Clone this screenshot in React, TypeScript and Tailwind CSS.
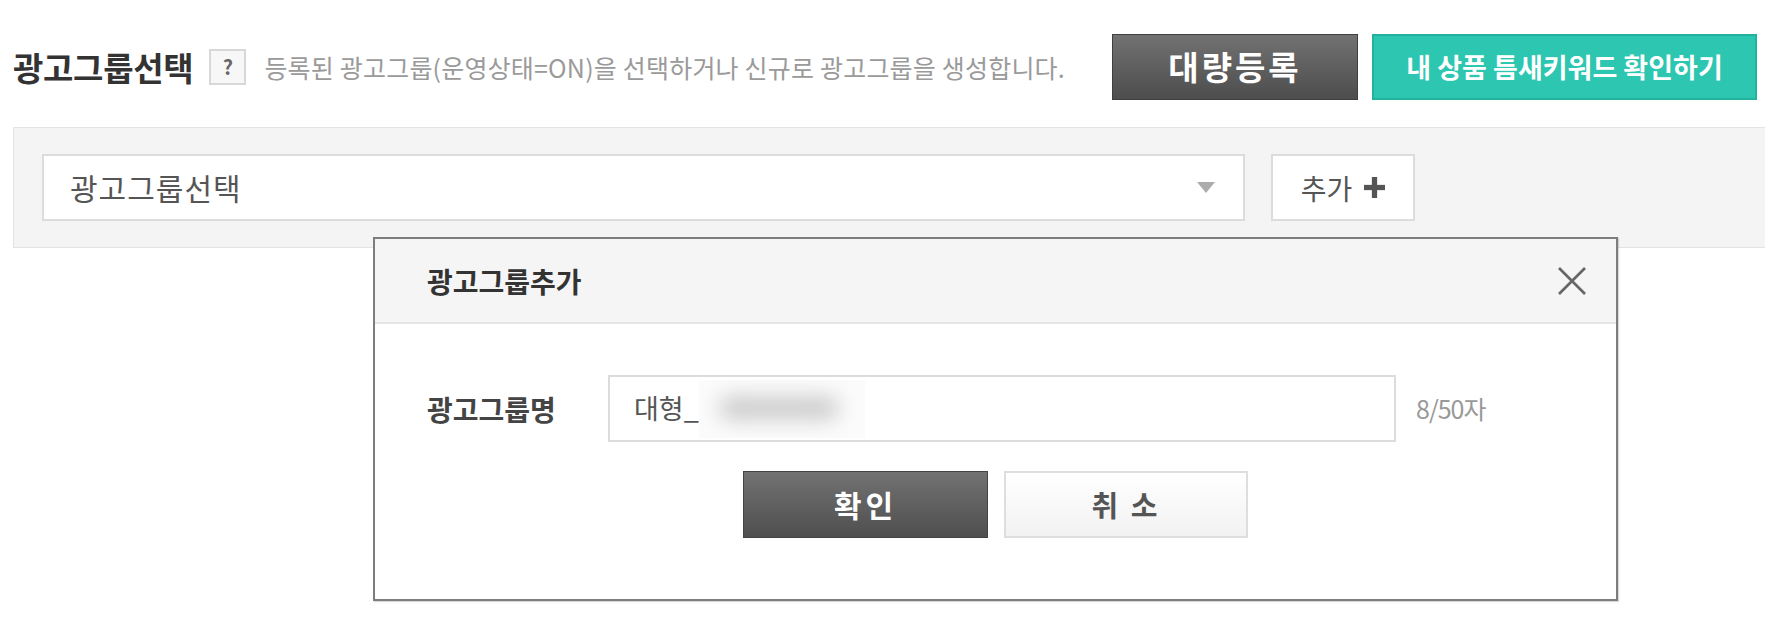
import React from "react";

function CloseIcon() {
  return (
    <svg width="32" height="32" viewBox="0 0 32 32">
      <line x1="3" y1="3" x2="29" y2="29" stroke="#666" strokeWidth="2.6" />
      <line x1="29" y1="3" x2="3" y2="29" stroke="#666" strokeWidth="2.6" />
    </svg>
  );
}

export default function App() {
  return (
    <div className="relative w-[1765px] h-[626px] bg-white overflow-hidden font-['Noto_Sans_CJK_KR','Noto_Sans',sans-serif]">
      {/* header row */}
      <div className="flex items-center h-[66px] mt-[34px] pl-[13px] pr-[8px]">
        <h1 className="text-[33px] font-bold text-[#333] tracking-[-0.3px] leading-none">광고그룹선택</h1>
        <div className="ml-[16px] w-[37px] h-[36px] border-2 border-[#d8d8d8] bg-[#f7f7f7] flex items-center justify-center text-[20px] font-bold text-[#666] leading-none">
          ?
        </div>
        <p className="ml-[18px] text-[25px] text-[#9a9a9a] tracking-[0.2px] leading-none">
          등록된 광고그룹(운영상태=ON)을 선택하거나 신규로 광고그룹을 생성합니다.
        </p>
        <div className="ml-auto flex gap-[14px]">
          <button className="w-[246px] h-[66px] border border-[#3f3f3f] bg-gradient-to-b from-[#727272] to-[#4d4d4d] text-white text-[33px] font-bold tracking-[3px] flex items-center justify-center">
            대량등록
          </button>
          <button className="w-[385px] h-[66px] border-2 border-[#22b39e] bg-[#2dc6b0] text-white text-[27px] font-bold tracking-[0px] flex items-center justify-center">
            내 상품 틈새키워드 확인하기
          </button>
        </div>
      </div>

      {/* grey panel */}
      <div className="mt-[27px] ml-[13px] h-[121px] border border-r-0 border-[#e3e3e3] bg-[#f4f4f4] flex items-start pt-[26px] pl-[28px] gap-[26px]">
        <div className="w-[1203px] h-[67px] border-2 border-[#dcdcdc] bg-white flex items-center pl-[26px] pr-[28px]">
          <span className="text-[30px] text-[#555] tracking-[1px]">광고그룹선택</span>
          <svg className="ml-auto" width="18" height="11" viewBox="0 0 18 11">
            <polygon points="0,0 18,0 9,11" fill="#acacac" />
          </svg>
        </div>
        <button className="w-[144px] h-[67px] border-2 border-[#dcdcdc] bg-white flex items-center justify-center gap-[12px]">
          <span className="text-[28px] text-[#555]">추가</span>
          <svg width="21" height="21" viewBox="0 0 20 20">
            <rect x="7.5" y="0" width="5" height="20" fill="#555" />
            <rect x="0" y="7.5" width="20" height="5" fill="#555" />
          </svg>
        </button>
      </div>

      {/* modal */}
      <div className="absolute left-[373px] top-[237px] w-[1245px] h-[364px] border-2 border-[#7d7d7d] bg-white flex flex-col shadow-[1px_1px_1px_rgba(0,0,0,0.15)]">
        <div className="h-[85px] shrink-0 bg-[#f5f5f5] border-b-2 border-[#e6e6e6] flex items-center pl-[52px] pr-[28px]">
          <span className="text-[28px] font-bold text-[#333] tracking-[0px]">광고그룹추가</span>
          <div className="ml-auto">
            <CloseIcon />
          </div>
        </div>
        <div className="flex flex-col pt-[51px]">
          <div className="flex items-center pl-[52px]">
            <span className="w-[181px] text-[28px] font-bold text-[#444] tracking-[0px]">광고그룹명</span>
            <div className="w-[788px] h-[67px] border-2 border-[#dcdcdc] bg-white flex items-center pl-[24px]">
              <span className="text-[27px] text-[#555] tracking-[0px]">대형_</span>
              <div className="relative w-[166px] h-[58px] bg-[#fbfbfb] overflow-hidden">
                <div className="absolute left-[20px] top-[16px] w-[120px] h-[24px] rounded-full bg-[#cdcdcd] blur-[10px]" />
              </div>
            </div>
            <span className="ml-[20px] text-[25px] text-[#999] tracking-[-1px]">8/50자</span>
          </div>
          <div className="flex justify-center gap-[16px] mt-[29px]">
            <button className="w-[245px] h-[67px] border border-[#444] bg-gradient-to-b from-[#727272] to-[#4f4f4f] text-white text-[30px] font-bold tracking-[4px] flex items-center justify-center">
              확인
            </button>
            <button className="w-[244px] h-[67px] border-2 border-[#dedede] bg-gradient-to-b from-white to-[#f2f2f2] text-[#555] text-[29px] font-bold tracking-[3px] flex items-center justify-center">
              취 소
            </button>
          </div>
        </div>
      </div>
    </div>
  );
}
